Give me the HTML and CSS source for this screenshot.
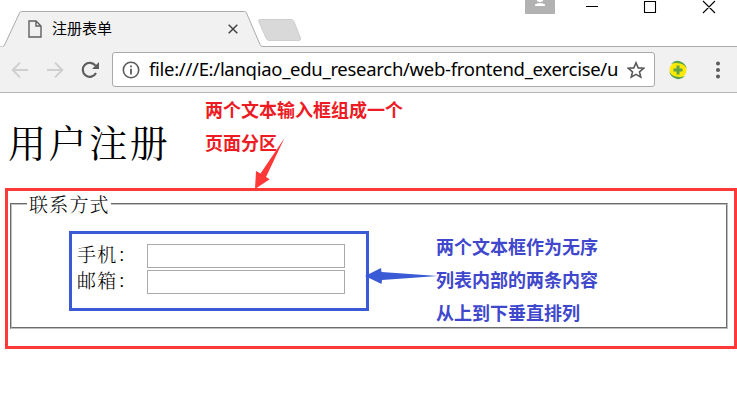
FILE: index.html
```html
<!DOCTYPE html>
<html lang="zh-CN">
<head>
<meta charset="utf-8">
<title>注册表单</title>
<link rel="stylesheet" href="styles.css">
</head>
<body>
<header class="tabstrip">
  <div class="tab">
    <svg class="tab-shape" width="302" height="47" viewBox="0 0 302 47">
      <path d="M0 46.5H2.5Q4 46.5 5 44L19.5 13Q20.200 11.500 21.500 11.500H244.500Q245.800 11.500 246.500 13L260 44.500Q261 46.500 262.500 46.500H302V47H0Z" fill="#f1f1f1"/>
      <path d="M3 46.500Q4 46.500 5 44L19.500 13Q20.200 11.500 21.500 11.500H244.500Q245.800 11.500 246.500 13L260 44.500Q261 46.500 262.500 46.500H302" fill="none" stroke="#ababab"/>
      <path d="M260 19.500H291Q293 19.500 294 21.500L300.500 38Q301 40.500 299 40.500H269Q267 40.500 266 38L259 22Q258 19.500 260 19.500Z" fill="#d9d9d9" stroke="#cecece"/>
    </svg>
    <svg class="tab-icon" width="14" height="18" viewBox="0 0 14 18"><path d="M1 1H8L13 6V17H1ZM8 1V6H13" fill="none" stroke="#606060" stroke-width="1.400"/></svg>
    <span class="tab-title">注册表单</span>
    <svg class="tab-close" width="10" height="10" viewBox="0 0 10 10"><path d="M.7.7L9.300 9.300M9.300.7L.7 9.300" stroke="#444" stroke-width="1.500"/></svg>
  </div>
  <div class="window-controls">
    <svg width="212" height="15" viewBox="0 0 212 15">
      <path d="M0 0H30V14H0Z" fill="#b2b2b2"/>
      <path d="M12 0H18V1Q15 3 12 1ZM10 6V4.500Q12 3 15 3Q18 3 20 4.500V6Z" fill="#fff"/>
      <path d="M61 6.500H73M119.500 1.500H130.500V12.500H119.500ZM178 1L190 13M190 1L178 13" fill="none" stroke="#000" stroke-width="1.100"/>
    </svg>
  </div>
</header>
<nav class="toolbar">
  <svg class="nav-icons" width="92" height="24" viewBox="0 0 92 24">
    <path d="M28 12H13M20 4.700L12.700 12L20 19.300M47 12H62M55 4.700L62.300 12L55 19.300" fill="none" stroke="#cfcfcf" stroke-width="1.900"/>
    <path d="M96.500 7.700A7 7 0 1 0 97 15" transform="translate(-1 0)" fill="none" stroke="#5c5c5c" stroke-width="2.200"/>
    <path d="M99 4V11H92Z" fill="#5c5c5c"/>
  </svg>
  <div class="address">
    <svg width="18" height="18" viewBox="0 0 18 18"><circle cx="9" cy="9" r="7.700" fill="none" stroke="#5a5a5a" stroke-width="1.600"/><path d="M8.100 4.500H9.900V6.300H8.100ZM8.100 7.800H9.900V13.500H8.100Z" fill="#5a5a5a"/></svg>
    <span class="url">file:///E:/lanqiao_edu_research/web-frontend_exercise/u</span>
    <svg width="18" height="18" viewBox="0 0 18 18"><path d="M9 1.800L11.200 6.900L16.600 7.300L12.500 10.900L13.800 16.200L9 13.400L4.200 16.200L5.500 10.900L1.400 7.300L6.800 6.900Z" fill="none" stroke="#5a5a5a" stroke-width="1.600"/></svg>
  </div>
  <svg class="extension" width="20" height="20" viewBox="0 0 20 20"><circle cx="10" cy="10" r="8.500" fill="#ffe900"/><path d="M3 4Q7-.5 12.500 1.400Q18 3.500 18.700 9Q17 4.500 12 3.400Q7 2.500 3 4ZM1.300 11Q3 15.500 8 16.600Q13 17.500 17 16Q13 20.500 7.500 18.600Q2 16.500 1.300 11Z" fill="#5da44a"/><path d="M10 5.500V14.500M5.500 10H14.500" stroke="#5da44a" stroke-width="3"/></svg>
  <svg class="menu" width="6" height="18" viewBox="0 0 6 18"><circle cx="3" cy="2.500" r="2" fill="#5a5a5a"/><circle cx="3" cy="9" r="2" fill="#5a5a5a"/><circle cx="3" cy="15.500" r="2" fill="#5a5a5a"/></svg>
</nav>
<main class="page">
  <h1>用户注册</h1>
  <fieldset>
    <legend>联系方式</legend>
    <ul>
      <li><label for="phone">手机：</label><input id="phone" type="text"></li>
      <li><label for="mail">邮箱：</label><input id="mail" type="text"></li>
    </ul>
  </fieldset>
</main>
<div class="frame frame-red"></div>
<div class="frame frame-blue"></div>
<p class="note note-red">两个文本输入框组成一个<br>页面分区</p>
<p class="note note-blue">两个文本框作为无序<br>列表内部的两条内容<br>从上到下垂直排列</p>
<svg class="arrows" width="737" height="413" viewBox="0 0 737 413">
  <path d="M284.500 138L266 177L269.700 179.300L255 189L256 171L260.500 173.500Z" fill="#ff3838"/>
  <path d="M365 276L381 268L381.500 272L438 276L382 280L381.500 284Z" fill="#3a5bd5"/>
</svg>
</body>
</html>
```
FILE: styles.css
```css
* { box-sizing: border-box; }
body {
  margin: 0;
  height: 413px;
  position: relative;
  overflow: hidden;
  background: #fff;
  color: #000;
  font-family: "Noto Sans CJK SC", sans-serif;
}
svg { display: block; flex: none; }
.tabstrip {
  height: 47px;
  display: flex;
  justify-content: space-between;
  border-bottom: 1px solid #ababab;
}
.tab {
  position: relative;
  width: 302px;
  height: 47px;
  display: flex;
  align-items: center;
  padding: 11px 64px 0 28px;
}
.tab-shape { position: absolute; left: 0; top: 0; }
.tab-icon, .tab-title, .tab-close { position: relative; }
.tab-title { margin: -2px 0 0 10px; font-size: 15px; line-height: 20px; flex: 1; }
.window-controls { width: 212px; }
.toolbar {
  height: 46px;
  display: flex;
  align-items: center;
  background: #f1f1f1;
  border-bottom: 1px solid #b6b6b6;
}
.nav-icons { overflow: visible; }
.address {
  width: 543px;
  height: 35px;
  margin-left: 20px;
  padding: 0 9px;
  display: flex;
  align-items: center;
  background: #fff;
  border: 1px solid #a9a9a9;
  border-radius: 3px;
}
.url {
  flex: 1;
  min-width: 0;
  margin: -2px 0 0 9px;
  font: 18.500px/30px "Noto Sans", sans-serif;
  letter-spacing: -0.290px;
  white-space: nowrap;
}
.extension { margin-left: 13px; }
.menu { margin-left: 27px; }
.page { padding: 20px 9px 0 10px; }
h1, fieldset { font-family: "Noto Serif CJK SC", "Noto Sans CJK SC", serif; }
h1 {
  margin: 0 0 0 -2px;
  height: 79px;
  font-size: 38px;
  font-weight: 400;
  line-height: 55px;
  letter-spacing: 2.600px;
}
fieldset {
  height: 137px;
  margin: 0;
  padding: 0 0 0 65px;
  border: 2px groove #bfbfbf;
  font-size: 19px;
  font-weight: 300;
  letter-spacing: 1.200px;
}
legend { margin-left: -50px; padding: 0 1px 0 2px; line-height: 24px; }
ul { margin: 28px 0 0; padding: 0; list-style: none; }
li { height: 26px; display: flex; align-items: flex-start; }
label { width: 70px; line-height: 20px; }
input { width: 198px; height: 24px; border: 1px solid #a9a9a9; padding: 1px; background: #fff; }
.frame { position: absolute; border: 3px solid; }
.frame-red { left: 5px; top: 188px; width: 732px; height: 161px; border-color: #ff3838; }
.frame-blue { left: 69px; top: 231px; width: 300px; height: 80px; border-color: #3a5bd5; }
.note { position: absolute; margin: 0; font-size: 18px; font-weight: 700; line-height: 33px; white-space: nowrap; }
.note-red { left: 205px; top: 93px; color: #ed1c24; }
.note-blue { left: 436px; top: 230px; color: #3f48cc; }
.arrows { position: absolute; left: 0; top: 0; pointer-events: none; }
```
